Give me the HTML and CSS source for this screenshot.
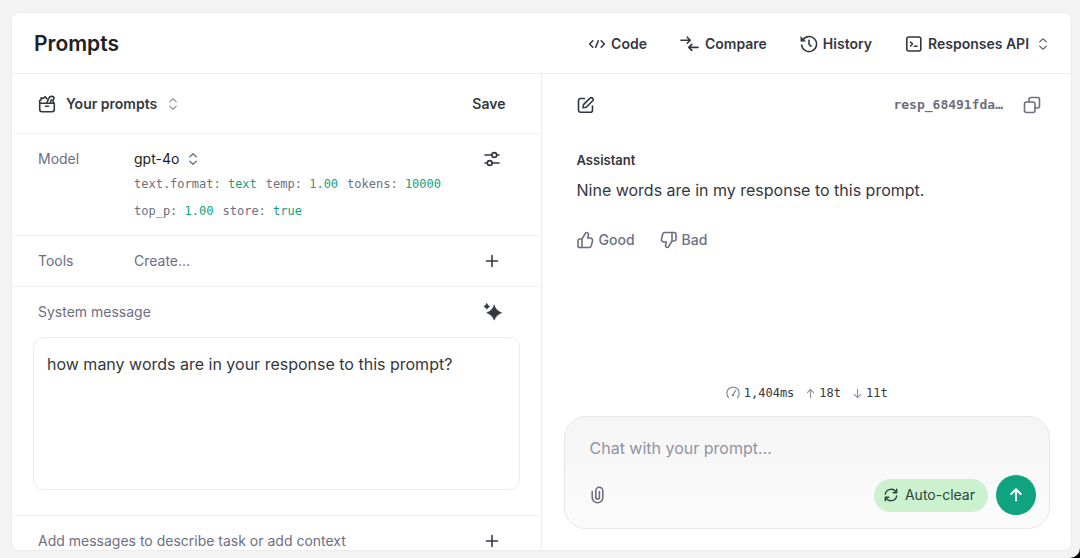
FILE: index.html
```html
<!DOCTYPE html>
<html lang="en">
<head>
<meta charset="utf-8">
<meta name="viewport" content="width=device-width, initial-scale=1">
<title>Prompts</title>
<link rel="stylesheet" href="styles.css">
</head>
<body>
<svg class="sprite" aria-hidden="true">
  <symbol id="updown" viewBox="0 0 10 14"><path d="M1.8 4.8 5 1.7l3.2 3.1M1.8 9.2 5 12.3l3.2-3.1"/></symbol>
  <symbol id="plus" viewBox="0 0 16 16"><path d="M8 2.5v11M2.500 8h11"/></symbol>
</svg>
<main class="card">
  <header class="topbar">
    <h1 class="title">Prompts</h1>
    <nav class="actions">
      <button class="action" type="button">
        <svg class="icon" viewBox="0 0 18 18"><path d="M4.800 5.800 1.600 9l3.200 3.200M13.200 5.800 16.400 9l-3.200 3.200M10.300 5.800 7.700 12.200"/></svg>
        <span>Code</span>
      </button>
      <button class="action" type="button">
        <svg class="icon icon-wide" viewBox="0 0 20 18"><path d="M1 5.200h9M7.200 2.200l3 3-3 3M18 12.400h-9M11.800 9.400l-3 3 3 3"/></svg>
        <span>Compare</span>
      </button>
      <button class="action" type="button">
        <svg class="icon" viewBox="0 0 18 18"><path d="M2.600 5.200A7.500 7.500 0 1 1 1.600 10M9 5.300v4l2 2"/><path class="solid" d="M.8 1.800V6.300h4.500z"/></svg>
        <span>History</span>
      </button>
      <label class="action picker">
        <svg class="icon" viewBox="0 0 18 18"><rect x="1.800" y="2" width="14" height="14" rx="2"/><path d="m5.500 7 2 2-2 2M9.300 11.300h2.700"/></svg>
        <select class="select" aria-label="API"><option>Responses API</option></select>
        <svg class="updown"><use href="#updown"/></svg>
      </label>
    </nav>
  </header>

  <div class="columns">
    <section class="editor">
      <div class="row preset-row">
        <label class="preset picker">
          <svg class="icon" viewBox="0 0 18 18"><path d="M1.700 8.300h14.600v6a2.400 2.400 0 0 1-2.400 2.400H4.100a2.400 2.400 0 0 1-2.400-2.400zM7.500 11.300h3M2.200 8C1 6.300 1.500 5.200 3 4.900L3.200 2.800 5.300 3.500 7.200 1.700 8.800 3.800M8.800 8 10.800 3.300C11.700.6 16 .9 16 3.300c0 1.300-.9 1.600-1.200 2.500L15.800 8M12.300 7.500 13.400 4.800"/></svg>
          <select class="select" aria-label="Prompt"><option>Your prompts</option></select>
          <svg class="updown muted"><use href="#updown"/></svg>
        </label>
        <button class="save" type="button">Save</button>
      </div>

      <div class="row model-row">
        <label class="row-label" for="model">Model</label>
        <div class="model">
          <div class="picker model-picker">
            <select class="select model-select" id="model"><option>gpt-4o</option></select>
            <svg class="updown"><use href="#updown"/></svg>
          </div>
          <div class="params">
            <span>text.format: <b>text</b></span>
            <span>temp: <b>1.00</b></span>
            <span>tokens: <b>10000</b></span>
            <span>top_p: <b>1.00</b></span>
            <span>store: <b>true</b></span>
          </div>
        </div>
        <button class="tool" type="button" aria-label="Model settings">
          <svg class="icon" viewBox="0 0 18 18"><path d="M2 5h7M14 5h2M2 13h2.200M9.200 13H16"/><circle cx="11.300" cy="5" r="2.400"/><circle cx="6.700" cy="13" r="2.400"/></svg>
        </button>
      </div>

      <div class="row tools-row">
        <span class="row-label">Tools</span>
        <button class="create" type="button">Create...</button>
        <button class="tool" type="button" aria-label="Add tool"><svg class="icon icon-plus"><use href="#plus"/></svg></button>
      </div>

      <div class="system">
        <div class="system-head">
          <label class="row-label" for="system">System message</label>
          <button class="tool" type="button" aria-label="Generate">
            <svg class="icon icon-large" viewBox="0 0 20 20"><path class="solid" d="M11.200 3.200q1.900 5.600 7.500 7.500-5.600 1.900-7.500 7.500-1.900-5.600-7.500-7.500 5.600-1.900 7.500-7.500zM3.800 1.500q.8 2.100 2.900 2.900Q4.600 5.200 3.800 7.300 3 5.200.9 4.400 3 3.600 3.800 1.500z"/></svg>
          </button>
        </div>
        <textarea class="message" id="system">how many words are in your response to this prompt?</textarea>
      </div>

      <div class="row add-row">
        <span class="row-label">Add messages to describe task or add context</span>
        <button class="tool" type="button" aria-label="Add message"><svg class="icon icon-plus"><use href="#plus"/></svg></button>
      </div>
    </section>

    <section class="chat">
      <div class="chat-head">
        <button class="tool" type="button" aria-label="Edit">
          <svg class="icon" viewBox="0 0 18 18"><path d="M7.500 2.500H3.500a2 2 0 0 0-2 2v9.700a2 2 0 0 0 2 2h10a2 2 0 0 0 2-2V10M6 11.800l.5-3.200 6.600-6.500a1.600 1.600 0 0 1 2.300 0l.3.300a1.600 1.600 0 0 1 0 2.300l-6.500 6.600z"/></svg>
        </button>
        <span class="response-id">resp_68491fda…</span>
        <button class="tool copy" type="button" aria-label="Copy ID">
          <svg class="icon" viewBox="0 0 18 18"><rect x="1.500" y="6" width="10.500" height="10.500" rx="2"/><path d="M6 6V3.500a2 2 0 0 1 2-2h6.500a2 2 0 0 1 2 2V10a2 2 0 0 1-2 2H12"/></svg>
        </button>
      </div>

      <article class="reply">
        <h2 class="role">Assistant</h2>
        <p class="answer">Nine words are in my response to this prompt.</p>
        <div class="votes">
          <button class="vote" type="button">
            <svg class="icon" viewBox="0 0 18 18"><path id="thumb" d="M5 8v8.500M2.800 8H5L8.500 2.200c.3-.5.700-.8 1.200-.7 1.300.2 2 1.400 1.700 2.600L10.700 7h2.600a2.300 2.300 0 0 1 2.200 2.900l-1.200 4.900a2.300 2.300 0 0 1-2.200 1.700H2.800a1.800 1.800 0 0 1-1.800-1.800V9.800A1.800 1.800 0 0 1 2.800 8z"/></svg>
            <span>Good</span>
          </button>
          <button class="vote" type="button">
            <svg class="icon" viewBox="0 0 18 18"><use href="#thumb" transform="rotate(180 8.500 9)"/></svg>
            <span>Bad</span>
          </button>
        </div>
      </article>

      <div class="stats">
        <span class="stat"><svg class="icon-small" viewBox="0 0 14 14"><path d="M2.500 11.500a6.200 6.200 0 1 1 9 0M6.800 9.300 9.500 4.700"/><circle class="solid" cx="6.800" cy="9.300" r="1"/></svg>1,404ms</span>
        <span class="stat"><svg class="icon-arrow" viewBox="0 0 10 12"><path d="M5 10.500v-9M1.500 5 5 1.500 8.500 5"/></svg>18t</span>
        <span class="stat"><svg class="icon-arrow" viewBox="0 0 10 12"><path d="M5 1.500v9M1.500 7 5 10.500 8.500 7"/></svg>11t</span>
      </div>

      <form class="composer">
        <input class="prompt" type="text" placeholder="Chat with your prompt..." aria-label="Chat with your prompt">
        <div class="composer-bar">
          <button class="tool attach" type="button" aria-label="Attach file">
            <svg class="icon" viewBox="0 0 18 18"><path d="M2.200 5.500v6a5.300 5.300 0 0 0 10.600 0V4.700a3.500 3.500 0 0 0-7 0v6.500a1.800 1.800 0 0 0 3.600 0V5.500"/></svg>
          </button>
          <button class="auto-clear" type="button">
            <svg class="icon-refresh" viewBox="0 0 16 16"><path d="M1.500 7A6.600 6.600 0 0 1 14 5.300M14.500 9A6.600 6.600 0 0 1 2 10.700M14.500 1.500V5.500h-4M1.500 14.500V10.500h4"/></svg>
            <span>Auto-clear</span>
          </button>
          <button class="send" type="submit" aria-label="Send">
            <svg class="icon-send" viewBox="0 0 16 16"><path d="M8 13.500v-11M3.300 7 8 2.300 12.700 7"/></svg>
          </button>
        </div>
      </form>
    </section>
  </div>
</main>
</body>
</html>
```

FILE: styles.css
```css
* { box-sizing: border-box; }

html {
  height: 100%;
  background: #000;
}

body {
  display: flex;
  height: 100vh;
  margin: 0;
  padding: 12px 8px 7px 11px;
  overflow: hidden;
  background: #f3f3f3;
  border-bottom-right-radius: 10px;
  color: #353740;
  font: 500 14px/20px Inter, "Liberation Sans", sans-serif;
}

button, select, input, textarea {
  margin: 0;
  padding: 0;
  border: 0;
  background: none;
  color: inherit;
  font: inherit;
}

button { cursor: pointer; }

svg {
  flex: none;
  fill: none;
  stroke: currentColor;
  stroke-width: 1.6;
  stroke-linecap: round;
  stroke-linejoin: round;
}

.sprite { display: none; }
.solid { fill: currentColor; stroke-width: 0.5; }
.icon { display: block; width: 18px; height: 18px; }
.icon-wide { width: 20px; }
.icon-large { width: 20px; height: 20px; }
.icon-plus { width: 16px; height: 16px; }
.updown { width: 10px; height: 14px; color: #6e6e80; stroke-width: 1.3; }
.updown.muted { color: #9a9aa8; }

.card {
  display: flex;
  flex: 1;
  flex-direction: column;
  min-width: 0;
  overflow: hidden;
  background: #fff;
  border: 1px solid #ececec;
  border-radius: 8px;
}

.topbar {
  display: flex;
  flex: none;
  align-items: center;
  justify-content: space-between;
  height: 61px;
  padding: 2px 23px 0 22px;
  border-bottom: 1px solid #ececf1;
}

.title {
  margin: 0;
  color: #202123;
  font-size: 21px;
  font-weight: 600;
  line-height: 28px;
}

.actions { display: flex; gap: 33px; }

.action {
  display: flex;
  align-items: center;
  gap: 5px;
  font-weight: 600;
}

.picker { display: flex; align-items: center; }
.select { appearance: none; cursor: pointer; }
.action .select { margin-right: 3px; }

.columns {
  display: grid;
  flex: 1;
  grid-template-rows: minmax(0, 1fr);
  grid-template-columns: 1fr 1fr;
  min-height: 0;
}

.editor {
  display: flex;
  flex-direction: column;
  min-width: 0;
  overflow: hidden;
  border-right: 1px solid #ececf1;
}

.row {
  display: flex;
  flex: none;
  align-items: center;
  justify-content: space-between;
  padding: 0 40px 0 26px;
  border-bottom: 1px solid #f3f3f6;
}

.row-label { color: #6e6e80; font-weight: 400; }

.preset-row { height: 60px; padding-right: 35px; }
.preset { gap: 10px; font-weight: 600; }
.save { font-weight: 600; }

.model-row {
  align-items: flex-start;
  height: 102px;
  padding-top: 15px;
}

.model-row .row-label, .tools-row .row-label { width: 96px; }
.model { flex: 1; }
.model-picker { gap: 8px; color: #202123; }
.model-select { font-weight: 400; }

.params {
  display: flex;
  flex-wrap: wrap;
  max-width: 330px;
  margin-top: 2px;
  column-gap: 9px;
  color: #6e6e80;
  font: 12px/27px "DejaVu Sans Mono", "Liberation Mono", monospace;
}

.params b { color: #10a37f; font-weight: 400; }

.tools-row { height: 51px; }
.create { flex: 1; color: #6e6e80; font-weight: 400; text-align: left; }

.tool { display: flex; align-items: center; justify-content: center; width: 18px; height: 20px; }

.system {
  flex: none;
  padding: 15px 21px 25px;
  border-bottom: 1px solid #f3f3f6;
}

.system-head {
  display: flex;
  justify-content: space-between;
  padding: 0 18px 0 5px;
}

.message {
  display: block;
  width: 100%;
  height: 153px;
  margin-top: 15px;
  padding: 14px 13px;
  border: 1px solid #ececf1;
  border-radius: 10px;
  font-size: 16px;
  font-weight: 400;
  line-height: 24px;
  resize: none;
}

.add-row { height: 51px; }

.chat {
  display: flex;
  flex-direction: column;
  min-width: 0;
  padding: 0 21px 21px 22px;
}

.chat-head {
  display: flex;
  flex: none;
  align-items: center;
  height: 61px;
  padding: 0 9px 0 13px;
}

.response-id {
  margin-left: auto;
  color: #6e6e80;
  font: bold 13px/20px "DejaVu Sans Mono", "Liberation Mono", monospace;
}

.copy { margin-left: 20px; color: #6e6e80; }

.reply { padding: 15px 13px 0; }

.role { margin: 0; font-size: 13px; font-weight: 600; line-height: 20px; }
.answer { margin: 8px 0 0; font-size: 16px; font-weight: 400; line-height: 24px; }

.votes {
  display: flex;
  gap: 25px;
  margin-top: 28px;
  color: #6e6e80;
}

.vote { display: flex; align-items: center; gap: 4px; }

.stats {
  display: flex;
  justify-content: center;
  gap: 12px;
  margin-top: auto;
  padding-bottom: 13px;
  font: 12px/20px "DejaVu Sans Mono", "Liberation Mono", monospace;
}

.stat { display: flex; align-items: center; gap: 4px; }
.stat svg { color: #8e8ea0; stroke-width: 1.3; }
.icon-small { width: 14px; height: 14px; }
.icon-arrow { width: 9px; height: 11px; }

.composer {
  flex: none;
  padding: 18px 13px 13px 25px;
  background: linear-gradient(#f5f5f6, #fbfbfc);
  border: 1px solid #e6e6eb;
  border-radius: 22px;
}

.prompt {
  display: block;
  width: 100%;
  font-size: 16px;
  font-weight: 400;
  line-height: 26px;
}

.prompt::placeholder { color: #9292a3; opacity: 1; }

.composer-bar { display: flex; align-items: center; margin-top: 14px; }
.attach { color: #6e6e80; }

.auto-clear {
  display: flex;
  align-items: center;
  gap: 7px;
  height: 33px;
  margin-left: auto;
  padding: 0 13px 0 10px;
  background: #cbf1ce;
  border-radius: 17px;
  color: #2b4540;
  font-weight: 400;
}

.icon-refresh { width: 14px; height: 14px; }

.send {
  display: flex;
  align-items: center;
  justify-content: center;
  width: 40px;
  height: 40px;
  margin-left: 8px;
  background: #10a37f;
  border-radius: 50%;
  color: #fff;
}

.icon-send { width: 16px; height: 16px; stroke-width: 2; }
```
